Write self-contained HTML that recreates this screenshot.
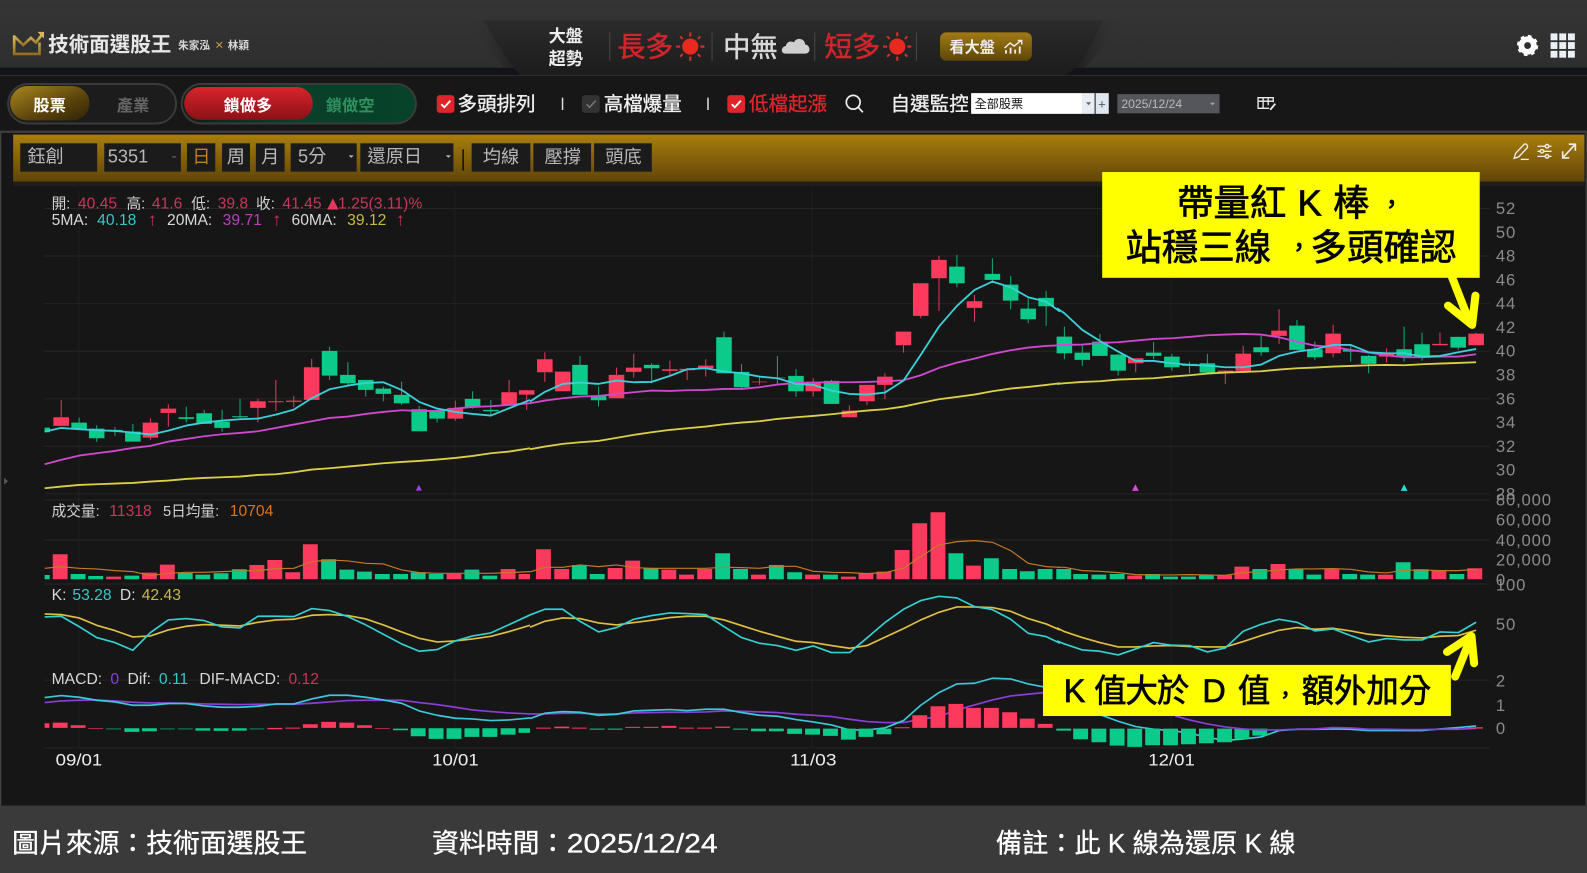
<!DOCTYPE html>
<html lang="zh-Hant">
<head>
<meta charset="utf-8">
<title>技術面選股王</title>
<style>
html,body{margin:0;padding:0;background:#3a3a3a;width:1587px;height:873px;overflow:hidden}
svg{display:block}
text{font-family:"Liberation Sans","Noto Sans CJK TC",sans-serif;white-space:pre}
.ax{font-size:16.5px;fill:#8a8a8a;letter-spacing:.8px}
.lb{font-size:14.5px;fill:#d2d2d2}
.nv{font-size:15.5px}
.xl{font-size:16px;fill:#eee}
.g18{font-size:18px;fill:#b8b8b8}
.tb{font-size:19.3px;fill:#f0f0f0;stroke:#f0f0f0;stroke-width:.35}
.ft{font-size:26.5px;fill:#fff;stroke:#fff;stroke-width:.3}
.ye{font-size:36px;fill:#000;stroke:#000;stroke-width:.7}
.yf{font-size:32px;fill:#000;stroke:#000;stroke-width:.7}
.ln{fill:none;stroke-linejoin:round}
.hl{font-size:27.7px;stroke-width:.5}
</style>
</head>
<body>
<svg xmlns="http://www.w3.org/2000/svg" width="1587" height="873" viewBox="0 0 1568 862.6" preserveAspectRatio="none">
<defs>
<linearGradient id="hd" x1="0" y1="0" x2="0" y2="1"><stop offset="0" stop-color="#353535"/><stop offset="1" stop-color="#2e2e2e"/></linearGradient>
<linearGradient id="dm" x1="0" y1="0" x2="0" y2="1"><stop offset="0" stop-color="#2b2b2b"/><stop offset="1" stop-color="#1c1c1c"/></linearGradient>
<linearGradient id="sl" x1="0" y1="0" x2="1" y2="0"><stop offset="0" stop-color="#333" stop-opacity="0"/><stop offset="1" stop-color="#1e1e1e"/></linearGradient>
<linearGradient id="sr" x1="1" y1="0" x2="0" y2="0"><stop offset="0" stop-color="#333" stop-opacity="0"/><stop offset="1" stop-color="#1a1a1a"/></linearGradient>
<linearGradient id="cr" x1="0" y1="0" x2="0" y2="1"><stop offset="0" stop-color="#e2c468"/><stop offset="1" stop-color="#93701f"/></linearGradient>
<linearGradient id="gb" x1="0" y1="0" x2="0" y2="1"><stop offset="0" stop-color="#a97e0c"/><stop offset="1" stop-color="#604509"/></linearGradient>
<linearGradient id="bt" x1="0" y1="0" x2="0" y2="1"><stop offset="0" stop-color="#a07a14"/><stop offset="1" stop-color="#5e4609"/></linearGradient>
<linearGradient id="kb" x1="0" y1="0" x2="1" y2="1"><stop offset="0" stop-color="#a8861e"/><stop offset=".6" stop-color="#5a430b"/><stop offset="1" stop-color="#2e2408"/></linearGradient>
<linearGradient id="rd" x1="0" y1="0" x2="0" y2="1"><stop offset="0" stop-color="#d8242c"/><stop offset="1" stop-color="#8b1116"/></linearGradient>
<linearGradient id="gn" x1="0" y1="0" x2="1" y2="0"><stop offset="0" stop-color="#0d1f18"/><stop offset=".5" stop-color="#0a3f2a"/><stop offset="1" stop-color="#07422a"/></linearGradient>
</defs>

<!-- page -->
<rect width="1568" height="863" fill="#161616"/>
<rect width="1568" height="67" fill="url(#hd)"/>
<rect y="67" width="1568" height="7" fill="#12141a"/>
<rect y="74" width="1568" height="1.2" fill="#2e2e2e"/>
<rect y="75" width="1568" height="54" fill="#171717"/>
<rect y="129" width="1568" height="2.4" fill="#3c3c3c"/>
<rect x="0" y="131" width="1.2" height="665" fill="#444"/>
<rect x="1566.5" y="131" width="1.5" height="665" fill="#3a3a3a"/>

<!-- dome -->
<path d="M462 20H480L516 67H498Q478 45 462 20z" fill="url(#sl)"/>
<path d="M1109 20H1088L1056 67H1072Q1092 45 1109 20z" fill="url(#sr)"/>
<path d="M478 20H1089C1080 40 1072 60 1054 74H514C500 60 490 40 478 20z" fill="url(#dm)"/>

<!-- logo -->
<g fill="none" stroke="url(#cr)" stroke-width="2.6">
<path d="M14 35V53.300H39V42"/>
<path d="M14 36L23 44.500L30.500 37.500L35.500 42L42 33.500"/>
</g>
<path d="M37 31.500H43.500V38z" fill="#d8b855"/>
<text x="47.5" y="51" font-size="20.3" font-weight="700" fill="#e8e8e8">技術面選股王</text>
<text x="176" y="48.5" font-size="10.5" font-weight="700" fill="#d8d8d8">朱家泓</text>
<text x="212.500" y="49" font-size="14" fill="#c9a13c">×</text>
<text x="225" y="48.5" font-size="10.5" font-weight="700" fill="#d8d8d8">林穎</text>

<!-- trend header -->
<text x="542" y="41.7" font-size="17" font-weight="700" fill="#eee">大盤</text>
<text x="542" y="63.7" font-size="17" font-weight="700" fill="#eee">超勢</text>
<path d="M602.5 32V60M703.5 32V60M805 32V60M905.5 32V60" stroke="#484848" stroke-width="1"/>
<text class="hl" x="610" y="56" fill="#d0252b" stroke="#d0252b">長多</text>
<g transform="translate(682,46)">
<circle r="8" fill="#e8291f"/>
<path d="M0-14V-10M0 14V10M-14 0H-10M14 0H10M-10-10L-7.500-7.500M10 10L7.500 7.500M-10 10L-7.500 7.500M10-10L7.500-7.500" stroke="#d8302a" stroke-width="2"/>
</g>
<text class="hl" x="714.5" y="56" fill="#d8d8d8" stroke="#d8d8d8" style="font-size:27px">中無</text>
<path d="M776 53C771 53 771.500 46 776.500 45.500C777 41 782 40 784.500 42C786 37 795 37 795.500 44C801 44.500 801.500 53 795.500 53z" fill="#cfcfcf"/>
<text class="hl" x="814.500" y="56" fill="#d0252b" stroke="#d0252b">短多</text>
<g transform="translate(886.500,46)">
<circle r="8" fill="#e8291f"/>
<path d="M0-14V-10M0 14V10M-14 0H-10M14 0H10M-10-10L-7.500-7.500M10 10L7.500 7.500M-10 10L-7.500 7.500M10-10L7.500-7.500" stroke="#d8302a" stroke-width="2"/>
</g>
<rect x="928.800" y="32" width="90.700" height="28" rx="6" fill="url(#bt)"/>
<text x="938" y="52" font-size="15" font-weight="700" fill="#eee">看大盤</text>
<g fill="none" stroke="#eee" stroke-width="1.800">
<path d="M994 53V49.500M998.500 53V47M1003 53V49M1007.500 53V46"/>
<path d="M992.500 47.500L998 42.500L1002 45.500L1009 40M1005.500 40H1009.500V44" stroke-width="1.400"/>
</g>

<!-- top-right icons -->
<g transform="translate(1509.300,45)" fill="none" stroke="#fff">
<circle r="6.200" stroke-width="5.600"/>
<circle r="9" stroke-width="3" stroke-dasharray="3.500 3.570"/>
</g>
<g fill="#e9eff5">
<rect x="1532" y="33" width="6.800" height="6.800"/><rect x="1540.600" y="33" width="6.800" height="6.800"/><rect x="1549.200" y="33" width="6.800" height="6.800"/>
<rect x="1532" y="41.600" width="6.800" height="6.800"/><rect x="1540.600" y="41.600" width="6.800" height="6.800"/><rect x="1549.200" y="41.600" width="6.800" height="6.800"/>
<rect x="1532" y="50.200" width="6.800" height="6.800"/><rect x="1540.600" y="50.200" width="6.800" height="6.800"/><rect x="1549.200" y="50.200" width="6.800" height="6.800"/>
</g>

<!-- toolbar pills -->
<rect x="8" y="83" width="166" height="39" rx="19.500" fill="#1c1c1c" stroke="#3a3a3a" stroke-width="2"/>
<rect x="10" y="85" width="78.500" height="34" rx="17" fill="url(#kb)"/>
<text x="33" y="109.500" font-size="16" font-weight="700" fill="#fff">股票</text>
<text x="115.500" y="109.500" font-size="16" font-weight="700" fill="#666">產業</text>
<rect x="179.500" y="83" width="231.500" height="39" rx="19.500" fill="url(#gn)" stroke="#3a3a3a" stroke-width="2"/>
<rect x="182" y="86" width="127" height="32.500" rx="16" fill="url(#rd)"/>
<text x="221" y="109.500" font-size="16" font-weight="700" fill="#fff">鎖做多</text>
<text x="322" y="109.500" font-size="16" font-weight="700" fill="#2f9060">鎖做空</text>

<!-- checks -->
<rect x="431.500" y="94" width="17.500" height="17.500" rx="3" fill="#e0242c"/>
<path d="M436 103L439 106L445 99.500" fill="none" stroke="#fff" stroke-width="1.800"/>
<text class="tb" x="452" y="109">多頭排列</text>
<path d="M555.800 96.500V108.700" stroke="#ddd" stroke-width="1.500"/>
<rect x="575" y="94" width="17.500" height="17.500" rx="3" fill="#333"/>
<path d="M579.500 103L582.500 106L588.500 99.500" fill="none" stroke="#777" stroke-width="1.500"/>
<text class="tb" x="596.500" y="109">高檔爆量</text>
<path d="M699.500 96.500V108.700" stroke="#ddd" stroke-width="1.500"/>
<rect x="718.600" y="94" width="17.500" height="17.500" rx="3" fill="#e0242c"/>
<path d="M723 103L726 106L732 99.500" fill="none" stroke="#fff" stroke-width="1.800"/>
<text x="740" y="109" font-size="19.300" fill="#e0242c" stroke="#e0242c" stroke-width=".35">低檔起漲</text>
<circle cx="843" cy="101" r="6.800" fill="none" stroke="#eee" stroke-width="1.700"/>
<path d="M848 106L852.500 111" stroke="#eee" stroke-width="1.700"/>
<text class="tb" x="880" y="109">自選監控</text>
<rect x="959.500" y="92" width="110" height="20.500" fill="#fff"/>
<text x="963" y="106.500" font-size="12" fill="#111">全部股票</text>
<rect x="1069.500" y="92" width="12" height="20.500" fill="#e6edf3"/>
<path d="M1073 101H1078L1075.500 104z" fill="#666"/>
<rect x="1082.500" y="92" width="13" height="20.500" fill="#dfe7ee"/>
<text x="1085" y="107" font-size="13" fill="#555">+</text>
<rect x="1104" y="93" width="101" height="19" fill="#55555c"/>
<text x="1108" y="106.500" font-size="12" fill="#bbb">2025/12/24</text>
<path d="M1195.500 101.500H1200.500L1198 104z" fill="#aaa"/>
<g fill="none" stroke="#eee" stroke-width="1.300">
<path d="M1254 107H1243V96.500H1258V101M1243 100H1258M1248 96.500V107M1253 96.500V104"/>
<path d="M1255 108.500L1260 102.500" stroke-width="1.800"/>
</g>

<!-- gold bar -->
<rect x="13" y="133" width="1552.500" height="46.500" fill="url(#gb)"/>
<rect x="13" y="179.500" width="1552.500" height="4.500" fill="#1e1e1e"/>
<g fill="#1b1b1b">
<rect x="20" y="141.600" width="76" height="28"/>
<rect x="103" y="141.600" width="75.700" height="28"/>
<rect x="184.700" y="141.600" width="28" height="28"/>
<rect x="219.400" y="141.600" width="27.600" height="28"/>
<rect x="252.800" y="141.600" width="28.400" height="28"/>
<rect x="287.200" y="141.600" width="65.200" height="28"/>
<rect x="356" y="141.600" width="92" height="28"/>
<rect x="466" y="141.600" width="58" height="28"/>
<rect x="527" y="141.600" width="57" height="28"/>
<rect x="587" y="141.600" width="57" height="28"/>
</g>
<path d="M457.600 147.500V168.500" stroke="#111" stroke-width="1.500"/>
<text class="g18" x="27" y="160.500" font-size="18">鈺創</text>
<text class="g18" x="106.500" y="160.500">5351</text>
<path d="M170 155H174" stroke="#555" stroke-width="1.500"/>
<text x="190" y="161" font-size="18" fill="#c47f20">日</text>
<text class="g18" x="224" y="161">周</text>
<text class="g18" x="258" y="161">月</text>
<text class="g18" x="294.500" y="160.500">5分</text>
<path d="M344.500 153.500H349.500L347 156z" fill="#bbb"/>
<text class="g18" x="363" y="160.500">還原日</text>
<path d="M440.500 153.500H445.500L443 156z" fill="#bbb"/>
<text class="g18" x="477" y="161">均線</text>
<text class="g18" x="538" y="161">壓撐</text>
<text class="g18" x="598" y="161">頭底</text>
<g fill="none" stroke="#eee" stroke-width="1.300">
<path d="M1496 156.500L1497.500 151.500L1506 142.500C1508 141.500 1510 144 1509 146L1500.500 155z"/>
<path d="M1502.500 157.500H1510.500"/>
<path d="M1519 144.500H1533M1519 149.500H1533M1519 154.500H1533"/>
</g>
<g fill="#a87f10" stroke="#eee" stroke-width="1.300">
<circle cx="1528.500" cy="144.500" r="1.800"/><circle cx="1523.500" cy="149.500" r="1.800"/><circle cx="1528.500" cy="154.500" r="1.800"/>
</g>
<g fill="none" stroke="#eee" stroke-width="1.600">
<path d="M1545 155L1555.500 143.500"/>
<path d="M1550 142.500H1556.500V149"/>
<path d="M1544 149.500V156H1550.500"/>
</g>

<path d="M4 472L8 475.500L4 479z" fill="#555"/>

<!-- grids -->
<g stroke="#252525" stroke-width="1" fill="none">
<path d="M44 206H1472M44 253H1472M44 300H1472M44 347H1472M44 394H1472M44 441H1472M44 488H1472M44 494H1472M44 533.500H1472M44 577H1472M44 672H1472M44 739H1472"/>
<path d="M78 188V739M449.500 188V739M802.500 188V739M1157 188V739" stroke="#202020"/>
</g>

<!-- candles left -->
<g transform="translate(0,187.700) scale(.334,.3293)">
<path fill="none" stroke="#e6385a" stroke-width="3" d="M181 630V708M445 685V750M498 643V710M763 626V697M816 570V663M869 618V652M922 507V630M1347 632V692M1506 570V645M1558 600V660"/>
<path fill="#fb3a5e" d="M158 682h46v26h-46zM422 698h46v45h-46zM475 656h46v13h-46zM740 634h46v20h-46zM793 634h46v3h-46zM846 632h46v4h-46zM899 532h46v98h-46zM1324 654h46v32h-46zM1483 607h46v38h-46zM1535 601h46v13h-46z"/>
<path fill="none" stroke="#16a878" stroke-width="3" d="M234 683V718M286 706V756M340 712V738M393 702V755M551 650V697M604 660V702M657 660V726M710 626V685M975 470V570M1029 517V585M1082 570V620M1134 590V634M1188 575V645M1240 648V724M1293 660V698M1398 604V656M1452 630V680"/>
<path fill="#0ccb8a" d="M132 713h16v14h-16zM211 698h46v20h-46zM263 716h46v29h-46zM317 720h46v2h-46zM370 725h46v30h-46zM528 682h46v5h-46zM581 670h46v32h-46zM634 695h46v19h-46zM687 679h46v3h-46zM952 483h46v74h-46zM1006 555h46v25h-46zM1059 570h46v30h-46zM1111 596h46v16h-46zM1165 615h46v25h-46zM1217 658h46v66h-46zM1270 662h46v24h-46zM1375 627h46v23h-46zM1429 660h46v4h-46z"/>
<polyline class="ln" stroke="#dccf48" stroke-width="5.500" points="132,895 181,890 234,885 286,883 340,881 393,879 445,875 498,872 551,867 604,864 657,862 710,860 763,855 816,853 869,847 922,839 975,835 1029,830 1082,825 1134,820 1188,816 1240,813 1293,809 1347,804 1398,798 1452,790 1506,785 1568,775"/>
<polyline class="ln" stroke="#cf48cf" stroke-width="5.500" points="132,823 181,810 234,797 286,790 340,783 393,774 445,768 498,755 551,747 604,739 657,733 710,729 763,724 816,714 869,704 922,694 975,684 1029,680 1082,672 1134,666 1188,661 1240,663 1293,663 1347,656 1398,651 1452,649 1506,645 1568,640"/>
<polyline class="ln" stroke="#3ad0d6" stroke-width="5.500" points="132,725 181,714 234,718 286,721 340,723 393,728 445,734 498,722 551,707 604,698 657,692 710,688 763,686 816,674 869,659 922,625 975,598 1029,587 1082,579 1134,577 1188,600 1240,636 1293,656 1347,666 1398,672 1452,677 1506,655 1568,630"/>
<path d="M1239 884L1248 902H1230z" fill="#9a40e0"/>
</g>

<!-- candles middle -->
<g transform="translate(523.600,227.200) scale(.334,.3293)">
<path fill="none" stroke="#e6385a" stroke-width="3" d="M44 367V456M256 413V505M307 372V443M414 392V438M465 415V450M520 388V440M679 440V465M838 445V500M945 526V562M997 465V525M1050 430V508M1105 305V368M1156 160V265M1210 78V243M1315 195V275"/>
<path fill="#fb3a5e" d="M21 388h46v39h-46zM74 425h46v59h-46zM233 435h46v70h-46zM284 413h46v13h-46zM391 418h46v5h-46zM442 417h46v4h-46zM497 407h46v8h-46zM656 455h46v2h-46zM815 456h46v28h-46zM922 542h46v20h-46zM974 465h46v49h-46zM1027 440h46v25h-46zM1082 305h46v41h-46zM1133 160h46v98h-46zM1187 90h46v55h-46zM1292 214h46v20h-46z"/>
<path fill="none" stroke="#16a878" stroke-width="3" d="M148 378V495M203 470V530M360 400V460M574 305V430M626 402V480M732 378V462M787 418V500M892 450V522M1263 75V172M1368 85V160M1422 138V238M1474 205V280M1527 183V288"/>
<path fill="#0ccb8a" d="M125 405h46v90h-46zM180 498h46v13h-46zM337 405h46v10h-46zM551 322h46v108h-46zM603 426h46v46h-46zM709 443h46v2h-46zM764 438h46v46h-46zM869 453h46v69h-46zM1240 110h46v50h-46zM1345 132h46v18h-46zM1399 164h46v48h-46zM1451 236h46v32h-46zM1504 204h46v25h-46z"/>
<polyline class="ln" stroke="#dccf48" stroke-width="5.500" points="0,658 44,650 97,642 148,637 203,633 256,624 307,615 360,607 414,600 465,595 520,590 574,583 626,578 679,574 732,567 787,562 838,558 892,553 945,547 997,542 1050,538 1105,530 1156,519 1210,508 1263,501 1315,494 1368,484 1422,476 1474,471 1527,465 1568,460"/>
<polyline class="ln" stroke="#cf48cf" stroke-width="5.500" points="0,520 44,512 97,505 148,500 203,498 256,492 307,487 360,482 414,483 465,481 520,480 574,477 626,477 679,472 732,464 787,459 838,458 892,457 945,457 997,456 1050,454 1105,451 1156,436 1210,414 1263,398 1315,386 1368,372 1422,361 1474,353 1527,348 1568,346"/>
<polyline class="ln" stroke="#3ad0d6" stroke-width="5.500" points="0,515 44,486 97,462 148,458 203,462 256,452 307,457 360,456 414,438 465,418 520,415 574,425 626,430 679,440 732,445 787,462 838,465 892,482 945,492 997,494 1050,488 1105,452 1156,375 1210,290 1263,228 1315,180 1368,155 1422,172 1474,202 1527,215 1568,245"/>
</g>

<!-- candles right -->
<g transform="translate(1044.300,227.200) scale(.334,.3293)">
<path fill="none" stroke="#e6385a" stroke-width="3" d="M233 385V427M498 421V462M551 348V423M657 238V342M817 285V382M975 355V398M1133 308V346M1240 308V346"/>
<path fill="#fb3a5e" d="M210 385h46v15h-46zM475 422h46v4h-46zM528 371h46v52h-46zM634 302h46v16h-46zM794 311h46v59h-46zM952 370h46v10h-46zM1110 342h46v4h-46zM1217 311h46v35h-46z"/>
<path fill="none" stroke="#16a878" stroke-width="3" d="M22 290V388M75 348V408M127 312V378M181 372V437M286 336V388M340 372V422M392 395V430M445 372V430M604 318V378M710 270V360M763 335V390M869 345V395M922 375V430M1027 290V395M1080 308V392M1187 320V360"/>
<path fill="#0ccb8a" d="M-1 320h46v50h-46zM52 368h46v22h-46zM104 335h46v43h-46zM158 374h46v48h-46zM263 368h46v10h-46zM317 380h46v32h-46zM369 402h46v6h-46zM422 400h46v28h-46zM581 352h46v15h-46zM687 287h46v73h-46zM740 358h46v24h-46zM846 360h46v5h-46zM899 378h46v24h-46zM1004 358h46v24h-46zM1057 343h46v37h-46zM1164 321h46v32h-46z"/>
<polyline class="ln" stroke="#dccf48" stroke-width="5.500" points="0,462 22,460 75,456 127,454 181,449 233,447 286,445 340,440 392,436 445,431 498,428 551,426 604,424 657,419 710,415 763,413 817,410 869,408 922,406 975,405 1027,406 1080,403 1133,401 1187,399 1240,397"/>
<polyline class="ln" stroke="#cf48cf" stroke-width="5.500" points="0,345 22,345 75,344 127,339 181,337 233,332 286,327 340,325 392,321 445,316 498,314 551,312 604,314 657,322 710,335 763,347 817,351 869,360 922,368 975,376 1027,382 1080,382 1133,380 1187,380 1240,373"/>
<polyline class="ln" stroke="#3ad0d6" stroke-width="5.500" points="0,235 22,250 75,300 127,333 181,365 233,393 286,393 340,400 392,405 445,407 498,412 551,412 604,404 657,378 710,365 763,358 817,345 869,345 922,367 975,370 1027,370 1080,380 1133,378 1187,367 1240,357"/>
<path d="M232 763L242 783H222z" fill="#d84ad8"/>
<path d="M1027 763L1037 783H1017z" fill="#2fd8d8"/>
</g>

<!-- lower panes left -->
<g transform="translate(0,494) scale(.334,.3293)">
<path fill="#fb3a5e" d="M156 163h44V238h-44zM314 230h44V238h-44zM420 218h44V238h-44zM473 194h44V238h-44zM738 195h44V238h-44zM791 180h44V238h-44zM844 217h44V238h-44zM896 133h44V238h-44zM1321 222h44V238h-44zM1481 207h44V238h-44zM1534 222h34V238h-34z"/>
<path fill="#0ccb8a" d="M132 225h15V238h-15zM209 222h44V238h-44zM261 228h44V238h-44zM368 227h44V238h-44zM526 219h44V238h-44zM578 224h44V238h-44zM632 220h44V238h-44zM686 208h44V238h-44zM950 178h44V238h-44zM1004 209h44V238h-44zM1056 215h44V238h-44zM1109 222h44V238h-44zM1163 222h44V238h-44zM1215 217h44V238h-44zM1268 222h44V238h-44zM1374 209h44V238h-44zM1427 227h44V238h-44z"/>
<polyline class="ln" stroke="#c47a25" stroke-width="3.500" points="132,205 181,200 234,205 286,207 340,212 393,215 445,227 498,220 551,217 604,217 657,215 710,213 763,212 816,206 869,205 922,185 975,180 1029,183 1082,190 1134,192 1188,210 1240,218 1293,220 1347,220 1398,220 1452,220 1506,218 1568,215"/>
<polyline class="ln" stroke="#e0c040" stroke-width="5" points="132,342 181,344 234,354 286,376 340,392 393,411 445,408 498,390 551,379 604,374 657,376 710,378 763,367 816,360 869,358 922,346 975,344 1029,347 1082,357 1134,375 1188,396 1240,415 1293,426 1347,423 1398,417 1452,409 1506,395 1568,376"/>
<polyline class="ln" stroke="#35d0d0" stroke-width="5" points="132,351 181,349 234,380 286,413 340,428 393,451 445,398 498,360 551,356 604,362 657,381 710,384 763,349 816,349 869,350 922,326 975,332 1029,350 1082,375 1134,403 1188,432 1240,454 1293,449 1347,423 1398,408 1452,399 1506,374 1568,345"/>
<path fill="#fb3a5e" d="M132 670h14V684h-14zM156 668h44V684h-44zM209 676h44V684h-44zM261 685h44V687h-44zM791 684h44V688h-44zM844 683h44V686h-44zM896 673h44V684h-44zM950 666h44V684h-44zM1004 668h44V684h-44zM1056 676h44V684h-44zM1109 685h44V687h-44z"/>
<path fill="#0ccb8a" d="M314 686h44V688h-44zM368 685h44V696h-44zM420 685h44V694h-44zM473 686h44V688h-44zM526 686h44V688h-44zM578 685h44V692h-44zM632 685h44V693h-44zM686 685h44V692h-44zM738 686h44V688h-44zM1163 686h44V691h-44zM1215 685h44V709h-44zM1268 685h44V717h-44zM1321 685h44V717h-44zM1374 685h44V711h-44zM1427 685h44V711h-44zM1481 685h44V704h-44zM1534 685h34V699h-34z"/>
<polyline class="ln" stroke="#8a3fd8" stroke-width="5" points="132,608 181,603 234,601 286,600 340,603 393,607 445,609 498,609 551,610 604,612 657,613 710,614 763,613 816,613 869,613 922,610 975,606 1029,602 1082,601 1134,601 1188,601 1240,608 1293,614 1347,622 1398,630 1452,635 1506,639 1568,642"/>
<polyline class="ln" stroke="#3cc8dc" stroke-width="5" points="132,593 181,587 234,592 286,601 340,606 393,616 445,616 498,611 551,611 604,618 657,622 710,622 763,619 816,612 869,612 922,597 975,586 1029,586 1082,592 1134,600 1188,610 1240,633 1293,646 1347,655 1398,657 1452,662 1506,660 1568,654"/>
</g>

<!-- lower panes middle -->
<g transform="translate(523.600,494) scale(.334,.3293)">
<path fill="#fb3a5e" d="M18 148h44V238h-44zM72 207h44V238h-44zM230 204h44V238h-44zM282 182h44V238h-44zM389 209h44V238h-44zM441 224h44V238h-44zM495 207h44V238h-44zM654 224h44V238h-44zM814 224h44V238h-44zM920 230h44V238h-44zM972 221h44V238h-44zM1025 215h44V238h-44zM1079 150h44V238h-44zM1131 70h44V238h-44zM1185 37h44V238h-44zM1290 197h44V238h-44z"/>
<path fill="#0ccb8a" d="M124 195h44V238h-44zM177 222h44V238h-44zM336 204h44V238h-44zM548 160h44V238h-44zM601 207h44V238h-44zM707 195h44V238h-44zM761 217h44V238h-44zM867 224h44V238h-44zM1238 160h44V238h-44zM1343 175h44V238h-44zM1397 207h44V238h-44zM1449 214h44V238h-44zM1502 207h44V238h-44z"/>
<polyline class="ln" stroke="#c47a25" stroke-width="3.500" points="0,216 44,202 97,202 148,195 203,200 256,195 307,203 360,205 414,205 465,205 520,205 574,202 626,203 679,205 732,199 787,199 838,214 892,217 945,218 997,221 1050,218 1105,205 1156,170 1210,135 1263,125 1315,122 1368,127 1422,152 1474,190 1527,200 1568,202"/>
<polyline class="ln" stroke="#e0c040" stroke-width="5" points="0,382 44,364 97,354 148,356 203,369 256,375 307,368 360,361 414,353 465,349 520,349 574,360 626,377 679,394 732,409 787,424 838,428 892,437 945,445 997,437 1050,412 1105,386 1156,360 1210,337 1263,321 1315,321 1368,323 1422,334 1474,356 1527,372 1568,390"/>
<polyline class="ln" stroke="#35d0d0" stroke-width="5" points="0,345 44,328 97,328 148,364 203,396 256,383 307,358 360,347 414,339 465,341 520,344 574,380 626,413 679,430 732,437 787,451 838,438 892,458 945,458 997,414 1050,368 1105,328 1156,302 1210,289 1263,294 1315,320 1368,329 1422,358 1474,400 1527,410 1568,430"/>
<polyline class="ln" stroke="#8a3fd8" stroke-width="5" points="0,642 44,642 97,640 148,640 203,642 256,642 307,639 360,638 414,637 465,637 520,636 574,633 626,634 679,636 732,638 787,643 838,646 892,650 945,658 997,665 1050,668 1105,668 1156,658 1210,650 1263,630 1315,615 1368,600 1422,588 1530,577"/>
<polyline class="ln" stroke="#3cc8dc" stroke-width="5" points="0,656 44,640 97,635 148,637 203,646 256,643 307,633 360,631 414,629 465,632 520,628 574,628 626,638 679,646 732,649 787,659 838,666 892,675 945,690 997,690 1050,684 1105,662 1156,616 1210,578 1263,552 1315,550 1368,535 1422,537 1474,552 1530,563"/>
<path fill="#fb3a5e" d="M18 683h44V686h-44zM72 680h44V685h-44zM124 683h44V686h-44zM282 681h44V684h-44zM336 681h44V684h-44zM389 678h44V684h-44zM441 683h44V686h-44zM495 683h44V686h-44zM548 680h44V684h-44zM1079 682h44V685h-44zM1131 646h44V684h-44zM1185 619h44V684h-44zM1238 612h44V684h-44zM1290 624h44V684h-44zM1343 624h44V684h-44zM1397 637h44V684h-44zM1449 656h44V684h-44zM1502 672h44V684h-44z"/>
<path fill="#0ccb8a" d="M177 686h44V689h-44zM230 686h44V689h-44zM601 686h44V689h-44zM654 686h44V694h-44zM707 686h44V694h-44zM761 686h44V702h-44zM814 686h44V704h-44zM867 686h44V708h-44zM920 686h44V719h-44zM972 686h44V711h-44zM1025 686h44V703h-44z"/>
</g>

<!-- lower panes right -->
<g transform="translate(1044.300,494) scale(.334,.3293)">
<path fill="#fb3a5e" d="M208 227h44V238h-44zM474 226h44V238h-44zM525 200h44V238h-44zM632 192h44V238h-44zM791 208h44V238h-44zM950 224h44V238h-44zM1108 211h44V238h-44zM1214 205h44V238h-44z"/>
<path fill="#0ccb8a" d="M-2 207h44V238h-44zM48 222h44V238h-44zM102 224h44V238h-44zM156 222h44V238h-44zM261 222h44V238h-44zM314 230h44V238h-44zM367 230h44V238h-44zM420 225h44V238h-44zM578 207h44V238h-44zM685 208h44V238h-44zM738 224h44V238h-44zM844 222h44V238h-44zM897 224h44V238h-44zM1002 187h44V238h-44zM1055 208h44V238h-44zM1161 222h44V238h-44z"/>
<polyline class="ln" stroke="#c47a25" stroke-width="3.500" points="0,202 22,202 75,212 127,214 181,218 233,224 286,225 340,225 392,224 445,225 498,226 551,218 604,215 657,210 710,207 763,207 817,206 869,208 922,216 975,219 1027,211 1080,210 1133,212 1187,212 1240,208"/>
<polyline class="ln" stroke="#e0c040" stroke-width="5" points="0,384 22,395 75,413 127,428 181,441 233,441 286,438 340,437 392,440 445,441 498,441 551,425 604,407 657,391 710,383 763,388 817,385 869,393 922,403 975,408 1027,412 1080,414 1133,409 1187,407 1240,391"/>
<polyline class="ln" stroke="#35d0d0" stroke-width="5" points="0,423 22,432 75,450 127,454 181,465 233,447 286,428 340,436 392,437 445,456 498,444 551,394 604,373 657,358 710,367 763,393 817,387 869,407 922,426 975,416 1027,420 1080,420 1133,396 1187,398 1240,367"/>
<polyline class="ln" stroke="#3cc8dc" stroke-width="5" points="130,645 181,664 233,680 286,688 340,692 392,700 445,712 498,722 551,717 604,711 657,692 710,688 763,688 817,687 869,688 922,692 975,692 1027,692 1080,692 1133,687 1187,683 1240,678"/>
<path fill="#0ccb8a" d="M-2 686h44V692h-44zM48 686h44V718h-44zM102 686h44V727h-44zM156 686h44V737h-44zM208 686h44V741h-44zM261 686h44V736h-44zM314 686h44V736h-44zM367 686h44V733h-44zM420 686h44V730h-44zM474 686h44V727h-44zM525 686h44V717h-44zM578 686h44V707h-44z"/>
<polyline class="ln" stroke="#8a3fd8" stroke-width="5" points="350,648 392,660 445,672 498,681 551,687 604,690 657,690 710,688 763,687 817,683 869,684 922,688 975,688 1027,689 1080,689 1133,688 1187,688 1240,685"/>
<path d="M1215 684h45" stroke="#fb3a5e" stroke-width="4"/>
</g>

<!-- axis labels -->
<g class="ax">
<text class="ax" x="1478" y="211.500">52</text>
<text class="ax" x="1478" y="235">50</text>
<text class="ax" x="1478" y="258.500">48</text>
<text class="ax" x="1478" y="282">46</text>
<text class="ax" x="1478" y="305.500">44</text>
<text class="ax" x="1478" y="329">42</text>
<text class="ax" x="1478" y="352.500">40</text>
<text class="ax" x="1478" y="376">38</text>
<text class="ax" x="1478" y="399.500">36</text>
<text class="ax" x="1478" y="423">34</text>
<text class="ax" x="1478" y="446.500">32</text>
<text class="ax" x="1478" y="470">30</text>
<text class="ax" x="1478" y="493.500">28</text>
<text class="ax" x="1478" y="499.500">80,000</text>
<text class="ax" x="1478" y="519.500">60,000</text>
<text class="ax" x="1478" y="539.500">40,000</text>
<text class="ax" x="1478" y="559">20,000</text>
<text class="ax" x="1478" y="578.500">0</text>
<text class="ax" x="1478" y="583.500">100</text>
<text class="ax" x="1478" y="622.500">50</text>
<text class="ax" x="1478" y="678.500">2</text>
<text class="ax" x="1478" y="702.500">1</text>
<text class="ax" x="1478" y="725.500">0</text>
</g>
<text class="xl" x="55" y="756.500" textLength="46" lengthAdjust="spacingAndGlyphs">09/01</text>
<text class="xl" x="427" y="756.500" textLength="46" lengthAdjust="spacingAndGlyphs">10/01</text>
<text class="xl" x="780.500" y="756.500" textLength="46" lengthAdjust="spacingAndGlyphs">11/03</text>
<text class="xl" x="1134.500" y="756.500" textLength="46" lengthAdjust="spacingAndGlyphs">12/01</text>

<!-- legends -->
<text class="lb" x="51" y="205.800">開:</text><text class="nv" x="77" y="205.800" fill="#c8365a">40.45</text>
<text class="lb" x="125" y="205.800">高:</text><text class="nv" x="150" y="205.800" fill="#c8365a">41.6</text>
<text class="lb" x="189" y="205.800">低:</text><text class="nv" x="215" y="205.800" fill="#c8365a">39.8</text>
<text class="lb" x="253" y="205.800">收:</text><text class="nv" x="279" y="205.800" fill="#c8365a">41.45</text>
<text x="319.500" y="206.800" font-size="19" fill="#e03a5e">▲</text><text class="nv" x="334" y="205.800" fill="#c8365a">1.25(3.11)%</text>
<text class="nv" x="51" y="222.300" fill="#d8d8d8">5MA:</text><text class="nv" x="96" y="222.300" fill="#35c8c8">40.18</text><text x="146" y="223" font-size="18" fill="#c8365a">↑</text>
<text class="nv" x="165" y="222.300" fill="#d8d8d8">20MA:</text><text class="nv" x="220" y="222.300" fill="#b840c0">39.71</text><text x="269" y="223" font-size="18" fill="#c8365a">↑</text>
<text class="nv" x="288" y="222.300" fill="#d8d8d8">60MA:</text><text class="nv" x="343" y="222.300" fill="#c4bc40">39.12</text><text x="391" y="223" font-size="18" fill="#c8365a">↑</text>

<text class="lb" x="51" y="509.800">成交量:</text><text class="nv" x="108" y="509.800" fill="#c8365a">11318</text>
<text class="lb" x="161" y="509.800">5日均量:</text><text class="nv" x="227" y="509.800" fill="#d8741e">10704</text>
<text class="nv" x="51" y="592.800" fill="#d8d8d8">K:</text><text class="nv" x="71.500" y="592.800" fill="#35c8c8">53.28</text>
<text class="nv" x="118.500" y="592.800" fill="#d8d8d8">D:</text><text class="nv" x="140" y="592.800" fill="#c4bc40">42.43</text>
<text class="nv" x="51" y="675.800" fill="#d8d8d8">MACD:</text><text class="nv" x="109" y="675.800" fill="#8a3fd8">0</text>
<text class="nv" x="126" y="675.800" fill="#d8d8d8">Dif:</text><text class="nv" x="157" y="675.800" fill="#35c8c8">0.11</text>
<text class="nv" x="197" y="675.800" fill="#d8d8d8">DIF-MACD:</text><text class="nv" x="285" y="675.800" fill="#c8365a">0.12</text>

<!-- annotation 1 -->
<rect x="1089" y="170" width="373" height="104.500" fill="#ff0"/>
<text class="ye" x="1163" y="213">帶量紅</text>
<text class="ye" x="1282" y="213">K</text>
<text class="ye" x="1317" y="213">棒</text>
<text class="ye" x="1363" y="210.500" style="font-size:24px">，</text>
<text class="ye" x="1112" y="257">站穩三線</text>
<text class="ye" x="1271.500" y="253" style="font-size:24px">，</text>
<text class="ye" x="1295" y="257">多頭確認</text>
<g transform="translate(1044.300,227.200) scale(.334,.3293)" fill="none" stroke="#ff0" stroke-width="24" stroke-linecap="round" stroke-linejoin="round">
<path d="M1168 140L1222 280"/>
<path d="M1157 227L1228 285L1238 197"/>
</g>

<!-- annotation 2 -->
<rect x="1030.500" y="657" width="403" height="50.500" fill="#ff0"/>
<text class="yf" x="1051" y="693.500">K</text>
<text class="yf" x="1081" y="693.500" textLength="94" lengthAdjust="spacing">值大於</text>
<text class="yf" x="1188" y="693.500">D</text>
<text class="yf" x="1223" y="693.500">值</text>
<text class="yf" x="1259.500" y="694" style="font-size:21px">，</text>
<text class="yf" x="1286" y="693.500">額外加分</text>
<g transform="translate(1044.300,494) scale(.334,.3293)" fill="none" stroke="#ff0" stroke-width="24" stroke-linecap="round" stroke-linejoin="round">
<path d="M1178 530L1222 420"/>
<path d="M1154 456L1226 408L1234 490"/>
</g>

<!-- footer -->
<rect y="796" width="1568" height="67" fill="#3a3a3a"/>
<text class="ft" x="12" y="842.500">圖片來源：技術面選股王</text>
<text class="ft" x="427" y="842.500">資料時間：</text>
<text class="ft" x="560" y="842.500" textLength="149" lengthAdjust="spacingAndGlyphs">2025/12/24</text>
<text class="ft" x="984" y="842.500" textLength="296" lengthAdjust="spacingAndGlyphs">備註：此 K 線為還原 K 線</text>
</svg>
</body>
</html>
